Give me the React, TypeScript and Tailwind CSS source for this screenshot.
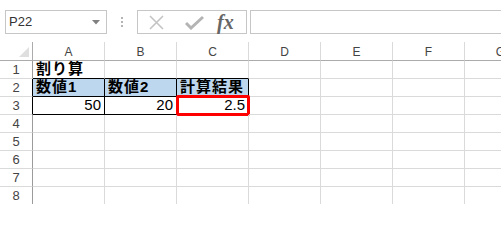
import React from "react";

const COLS = ["A", "B", "C", "D", "E", "F", "G"];
const ROWS = [1, 2, 3, 4, 5, 6, 7, 8];

type Cell = { text?: string; bold?: boolean; right?: boolean };

const data: Record<string, Cell> = {
  A1: { text: "割り算", bold: true },
  A2: { text: "数値1", bold: true },
  B2: { text: "数値2", bold: true },
  C2: { text: "計算結果", bold: true },
  A3: { text: "50", right: true },
  B3: { text: "20", right: true },
  C3: { text: "2.5", right: true },
};

const jp = "font-['Liberation_Sans','Noto_Sans_CJK_JP',sans-serif]";

function inTable(col: string, row: number) {
  return ["A", "B", "C"].includes(col) && (row === 2 || row === 3);
}

function cellClass(col: string, row: number) {
  const base = "relative flex items-end px-[3px] pb-[1px] border-r border-b border-[#dadada]";
  const parts = [base];
  if (inTable(col, row)) parts.push("border-r-black border-b-black");
  if (["A", "B", "C"].includes(col) && row === 1) parts.push("border-b-black");
  if (row === 2 && inTable(col, row)) parts.push("bg-[#bdd7ee]");
  return parts.join(" ");
}

function Toolbar() {
  return (
    <div className="flex h-[42px] items-start pl-[5px] pt-[10px]">
      <div className="flex h-[24px] w-[102px] items-center justify-between border border-[#c6c6c6] pl-[3px] pr-[6px]">
        <span className="font-['Liberation_Sans',sans-serif] text-[13px] text-[#333]">P22</span>
        <svg width="8" height="5" viewBox="0 0 8 5">
          <path d="M0 0h8L4 4.5z" fill="#808080" />
        </svg>
      </div>
      <div className="flex h-[24px] w-[30px] flex-col items-center justify-center gap-[2px]">
        <span className="h-[2px] w-[2px] bg-[#b4b4b4]" />
        <span className="h-[2px] w-[2px] bg-[#b4b4b4]" />
        <span className="h-[2px] w-[2px] bg-[#b4b4b4]" />
      </div>
      <div className="flex h-[24px] w-[110px] items-center border border-[#c6c6c6]">
        <svg className="ml-[11px]" width="15" height="15" viewBox="0 0 15 15">
          <path d="M1 1L14 14M14 1L1 14" stroke="#c4c4c4" strokeWidth="1.6" />
        </svg>
        <svg className="ml-[21px]" width="19" height="15" viewBox="0 0 19 15">
          <path d="M1 8l5 5L18 2" stroke="#b4b4b4" strokeWidth="3" fill="none" />
        </svg>
        <span className="ml-[13px] font-['Liberation_Serif',serif] text-[20px] font-bold italic leading-none text-[#666]">
          fx
        </span>
      </div>
      <div className="ml-[3px] h-[24px] flex-1 -mr-[2px] border border-[#c6c6c6]" />
    </div>
  );
}

export default function App() {
  return (
    <div className="h-[204px] w-[501px] overflow-hidden bg-white">
      <Toolbar />
      <div className="grid w-[537px] grid-cols-[33px_72px_72px_72px_72px_72px_72px_72px] grid-rows-[19px_repeat(8,18px)]">
        <div className="relative border-r border-b border-[#ababab]">
          <svg className="absolute right-[3px] bottom-[3px]" width="10" height="10" viewBox="0 0 10 10">
            <path d="M10 0V10H0z" fill="#dfdfdf" />
          </svg>
        </div>
        {COLS.map((c) => (
          <div
            key={c}
            className="flex items-center justify-center border-b border-b-[#ababab] border-r border-r-[#dadada] pt-[1px] font-['Liberation_Sans',sans-serif] text-[12px] text-[#444]"
          >
            {c}
          </div>
        ))}
        {ROWS.map((r) => (
          <React.Fragment key={r}>
            <div
              className={`flex items-center justify-center border-b border-b-[#dadada] border-r ${
                r === 2 || r === 3 ? "border-r-black" : "border-r-[#9b9b9b]"
              } font-['Liberation_Sans',sans-serif] text-[13px] text-[#444]`}
            >
              {r}
            </div>
            {COLS.map((c) => {
              const key = `${c}${r}`;
              const cell = data[key];
              return (
                <div key={key} className={cellClass(c, r)}>
                  {cell && (
                    <span
                      className={`${jp} w-full whitespace-nowrap text-[15px] leading-[17px] text-black ${
                        cell.right ? "text-right" : ""
                      } ${cell.bold ? "font-bold tracking-[1px]" : ""}`}
                    >
                      {cell.text}
                    </span>
                  )}
                  {key === "C3" && (
                    <div className="absolute -left-[1px] -top-[2px] -right-[2px] -bottom-[2px] rounded-[2px] border-[3px] border-[#ff0000]" />
                  )}
                </div>
              );
            })}
          </React.Fragment>
        ))}
      </div>
    </div>
  );
}
